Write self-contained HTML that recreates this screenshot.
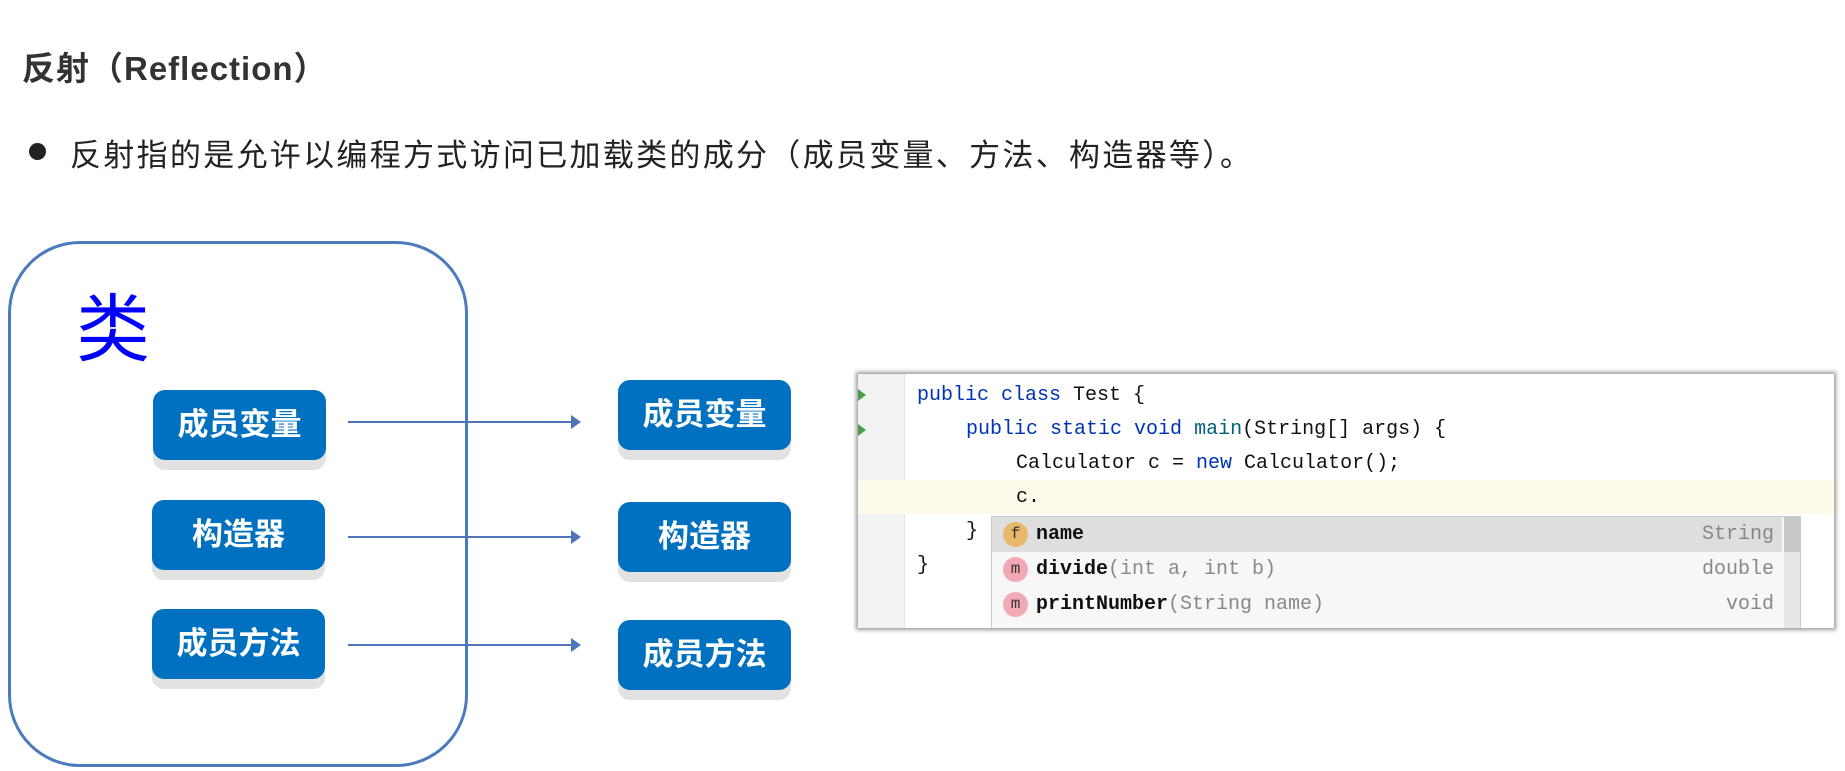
<!DOCTYPE html>
<html><head><meta charset="utf-8"><style>
body{margin:0;width:1845px;height:771px;background:#fff;position:relative;overflow:hidden;font-family:"Liberation Sans","Noto Sans CJK SC",sans-serif}
.abs{position:absolute}
.title{left:22px;top:42px;font-size:33px;font-weight:bold;color:#333;white-space:nowrap;letter-spacing:1px}
.bullet{left:29px;top:143px;width:17px;height:17px;border-radius:50%;background:#222}
.desc{left:70px;top:130px;font-size:31px;color:#222;white-space:nowrap;letter-spacing:2.3px}
.box{left:8px;top:241px;width:454px;height:520px;border:3px solid #4a7bbb;border-radius:72px}
.lei{left:76px;top:270px;font-size:74px;color:#0000ff}
.btn{width:173px;height:70px;background:#0070c0;border-radius:12px;color:#fff;font-weight:bold;font-size:31px;text-align:center;line-height:70px;box-shadow:0 10px 0 #e2e2e2}
.arr{height:2px;background:#4f74b8;width:225px}
.arr:after{content:"";position:absolute;right:-8px;top:-6px;border-left:10px solid #4f74b8;border-top:7px solid transparent;border-bottom:7px solid transparent}
.code{left:858px;top:374px;width:976px;height:254px;background:#fff;box-shadow:0 0 4px 2px #999;overflow:hidden;font-family:"Liberation Mono",monospace;font-size:20px}
.gut{left:0;top:0;width:46px;height:254px;background:#f2f2f2;border-right:1px solid #e4e4e4}
.ln{position:absolute;white-space:pre;color:#111}
.kw{color:#0033b3}.fn{color:#00627a}
.pop{left:133px;top:142px;width:808px;height:120px;background:#f7f7f7;border:1px solid #ccc}
.row{position:absolute;left:0;width:790px;height:35px;line-height:35px}
.ic{position:absolute;left:11px;top:5px;width:25px;height:25px;border-radius:50%;font-size:16px;line-height:25px;text-align:center;color:#333}
.t{position:absolute;left:44px;white-space:pre;font-weight:bold;color:#111}
.t span{font-weight:normal;color:#888}
.r{position:absolute;right:8px;color:#888}
</style></head><body>
<div class="abs title">反射（Reflection）</div>
<div class="abs bullet"></div>
<div class="abs desc">反射指的是允许以编程方式访问已加载类的成分（成员变量、方法、构造器等）。</div>
<div class="abs box"></div>
<div class="abs lei">类</div>
<div class="abs btn" style="left:153px;top:390px">成员变量</div>
<div class="abs btn" style="left:152px;top:500px">构造器</div>
<div class="abs btn" style="left:152px;top:609px">成员方法</div>
<div class="abs btn" style="left:618px;top:380px">成员变量</div>
<div class="abs btn" style="left:618px;top:502px">构造器</div>
<div class="abs btn" style="left:618px;top:620px">成员方法</div>
<div class="abs arr" style="left:348px;top:421px"></div>
<div class="abs arr" style="left:348px;top:536px"></div>
<div class="abs arr" style="left:348px;top:644px"></div>
<div class="abs code">
 <div class="abs gut"></div>
 <div class="abs" style="left:0;top:106px;width:976px;height:34px;background:#fdfbea"></div>
 <div class="abs" style="left:0;top:15px;border-left:8px solid #4a9e4a;border-top:6px solid transparent;border-bottom:6px solid transparent"></div>
 <div class="abs" style="left:0;top:50px;border-left:8px solid #4a9e4a;border-top:6px solid transparent;border-bottom:6px solid transparent"></div>
 <div class="ln" style="left:59px;top:10px"><span class="kw">public class</span> Test {</div>
 <div class="ln" style="left:108px;top:44px"><span class="kw">public static void</span> <span class="fn">main</span>(String[] args) {</div>
 <div class="ln" style="left:158px;top:78px">Calculator c = <span class="kw">new</span> Calculator();</div>
 <div class="ln" style="left:158px;top:112px">c.</div>
 <div class="ln" style="left:108px;top:146px">}</div>
 <div class="ln" style="left:59px;top:180px">}</div>
 <div class="abs pop">
  <div class="row" style="top:0;background:#dedede"><div class="ic" style="background:#e8b86a">f</div><div class="t">name</div><div class="r">String</div></div>
  <div class="row" style="top:35px"><div class="ic" style="background:#f2a9b5">m</div><div class="t">divide<span>(int a, int b)</span></div><div class="r">double</div></div>
  <div class="row" style="top:70px"><div class="ic" style="background:#f2a9b5">m</div><div class="t">printNumber<span>(String name)</span></div><div class="r">void</div></div>
  <div class="abs" style="right:0;top:0;width:16px;height:120px;background:#e6e6e6"></div>
  <div class="abs" style="right:0;top:0;width:16px;height:35px;background:#c8c8c8"></div>
 </div>
</div>
</body></html>
